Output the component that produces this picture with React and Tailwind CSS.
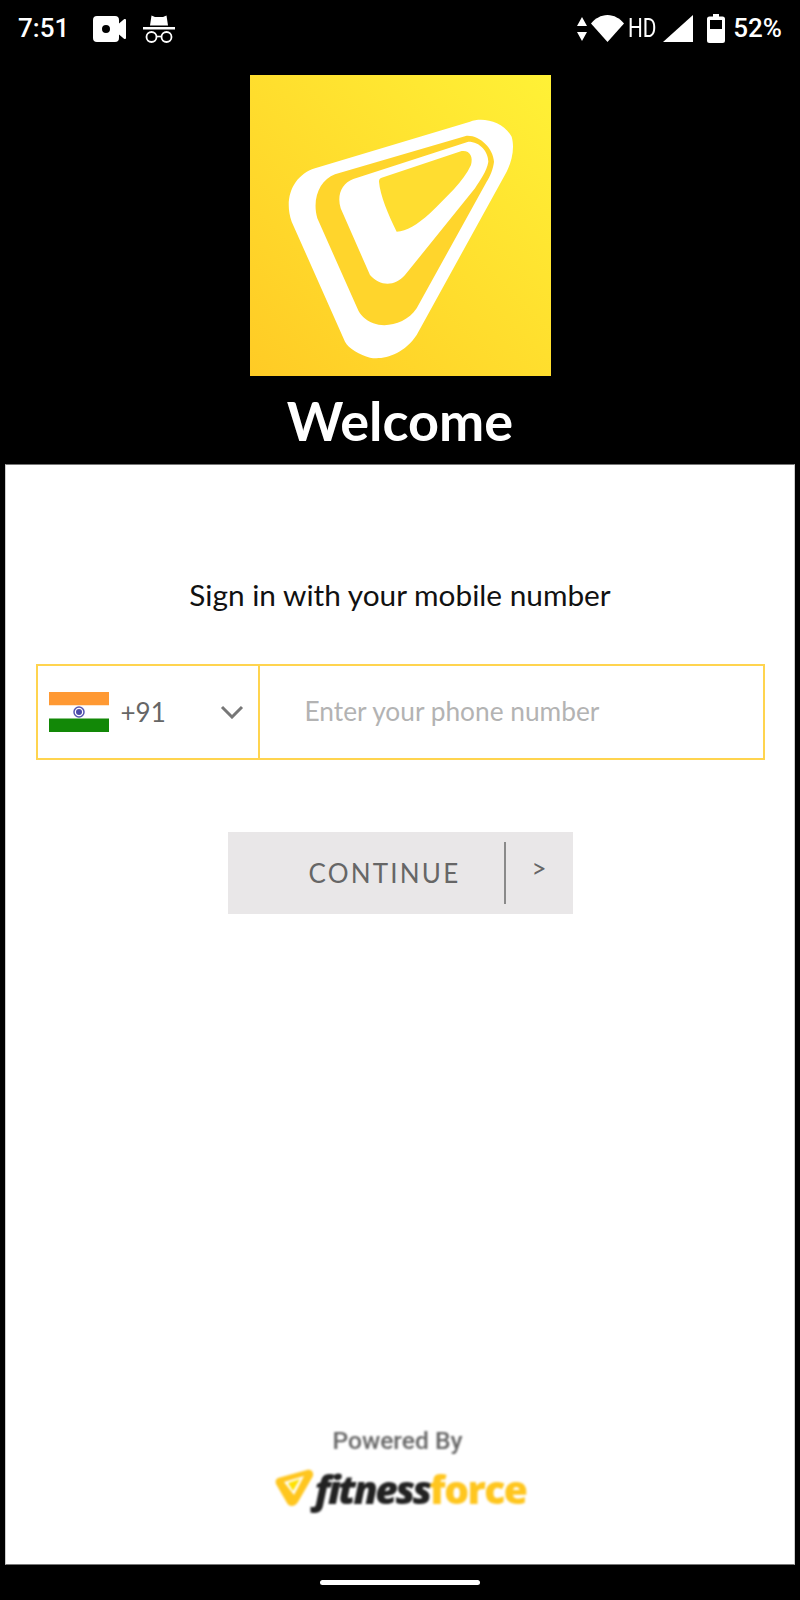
import React from 'react';

const StatusBar = () => (
  <div className="h-[56px] shrink-0 flex items-center justify-between pl-[18px] pr-[18px] pt-[1px] text-white font-['Roboto',sans-serif] font-medium text-[26px]">
    <div className="flex items-center">
      <span className="w-[50px]">7:51</span>
      <svg className="ml-[25px]" width="34" height="26" viewBox="0 0 34 26">
        <path fill="#fff" fillRule="evenodd" d="M4 0h18a4 4 0 0 1 4 4v3.500l5-4.200c1-.8 2-.3 2 1v17.400c0 1.300-1 1.800-2 1l-5-4.200V22a4 4 0 0 1-4 4H4a4 4 0 0 1-4-4V4a4 4 0 0 1 4-4zM13 9a4 4 0 1 0 0 8 4 4 0 0 0 0-8z" />
      </svg>
      <svg className="ml-[16px]" width="32" height="29" viewBox="0 0 32 29">
        <path fill="#fff" d="M7 11.500 8.500 1.500 12 3h8l3.500-1.500L25 11.500z" />
        <rect x="0" y="13" width="32" height="2.500" fill="#fff" />
        <circle cx="8.500" cy="23" r="5" fill="none" stroke="#fff" strokeWidth="1.800" />
        <circle cx="23.500" cy="23" r="5" fill="none" stroke="#fff" strokeWidth="1.800" />
        <path d="M13 22.500h6" stroke="#fff" strokeWidth="1.600" />
      </svg>
    </div>
    <div className="flex items-center">
      <svg width="10" height="24" viewBox="0 0 10 24">
        <path fill="#fff" d="M5 0l5 9H0zM0 15h10l-5 9z" />
      </svg>
      <svg className="ml-[4px]" width="33" height="27" viewBox="0 0 33 27">
        <path fill="#fff" d="M16.500 27 0 8.500C4 3.500 10 0 16.500 0S29 3.500 33 8.500z" />
      </svg>
      <span className="ml-[4px] w-[26px] text-[26px] font-normal scale-x-[0.8] origin-left whitespace-nowrap">HD</span>
      <svg className="ml-[9px]" width="30" height="27" viewBox="0 0 30 27">
        <path fill="#fff" d="M30 0v27H0z" />
      </svg>
      <svg className="ml-[14px]" width="18" height="29" viewBox="0 0 18 29">
        <path fill="#fff" fillRule="evenodd" d="M6 0h6v2.500h3.500A2.500 2.500 0 0 1 18 5v21.500a2.500 2.500 0 0 1-2.500 2.500h-13A2.500 2.500 0 0 1 0 26.500V5a2.500 2.500 0 0 1 2.500-2.500H6zM3 6v9h12V6z" />
      </svg>
      <span className="ml-[8px]">52%</span>
    </div>
  </div>
);

const BrandLogo = () => (
  <svg className="w-[301px] h-[301px] block" viewBox="30 30 903 903">
    <defs>
      <linearGradient id="brandBg" x1="0" y1="1" x2="1" y2="0">
        <stop offset="0" stopColor="#ffcb25" />
        <stop offset="1" stopColor="#fff136" />
      </linearGradient>
    </defs>
    <rect x="30" y="30" width="903" height="903" fill="url(#brandBg)" />
    <path fill="#fff" d="M225 310 690 170C730 155 790 170 815 215 825 250 815 290 800 320L530 810C490 870 430 885 390 878 360 870 325 850 315 830L155 470C130 400 160 330 225 310Z" />
    <path fill="#ffd52c" d="M285 328 680 212C720 210 760 250 762 290 760 310 750 335 740 350L530 730C500 775 440 790 400 775 375 765 360 750 352 730L232 460C215 400 240 345 285 328Z" />
    <path fill="#fff" d="M340 342 685 230C720 230 745 260 745 290 740 320 720 345 705 370L495 630C465 665 420 665 390 630L302 430C290 390 305 355 340 342Z" />
    <path fill="#ffdd30" d="M425 338 665 258C690 255 700 275 693 300 670 350 620 395 570 445 530 480 500 500 470 500 445 450 420 390 417 350 417 342 420 340 425 338Z" />
  </svg>
);

const IndiaFlag = () => (
  <svg width="60" height="40" viewBox="0 0 60 40" className="shrink-0">
    <rect width="60" height="13.500" fill="#ff9933" />
    <rect y="13.500" width="60" height="13" fill="#fff" />
    <rect y="26.500" width="60" height="13.500" fill="#128807" />
    <circle cx="30" cy="20" r="5" fill="#fff" stroke="#5555b0" strokeWidth="1.500" />
    <circle cx="30" cy="20" r="3" fill="#4a4aa8" />
  </svg>
);

const FooterLogo = () => (
  <div className="flex items-center blur-[1px] h-[40px]">
    <svg width="40" height="38" viewBox="0 0 40 38">
      <path fill="#ffc61f" d="M4 9 33 1c4-1 7 2 6 6L24 33c-3 5-9 5-11 1L2 15c-1-3 0-5 2-6z" />
      <path fill="#fff" d="M10 13 30 7 20 26z" />
      <path fill="#ffe100" d="M14 14 26 10 19 22z" />
    </svg>
    <span className="ml-[1px] font-['Open_Sans',sans-serif] font-extrabold italic text-[39px] leading-none tracking-[-2.500px] text-[#222]">fitness</span>
    <span className="font-['Open_Sans',sans-serif] font-extrabold text-[39px] leading-none tracking-[-1.500px] text-[#ffc61f]">force</span>
  </div>
);

export default function App() {
  return (
    <div className="w-[800px] h-[1600px] bg-black flex flex-col font-['Lato',sans-serif]">
      <StatusBar />
      <div className="flex flex-col items-center pt-[19px]">
        <BrandLogo />
        <h1 className="text-white font-bold text-[54px] leading-[88px] h-[88px] pt-[1px]">Welcome</h1>
      </div>
      <div className="mx-[5px] h-[1101px] bg-white border-y border-y-[#777] border-x border-x-[#ccc] flex flex-col items-center">
        <p className="mt-[112px] text-[29.8px] leading-[36px] text-[#111]">Sign in with your mobile number</p>
        <div className="mt-[51px] w-[729px] h-[96px] border-2 border-[#ffd44f] flex">
          <div className="w-[222px] border-r-2 border-r-[#ffd44f] flex items-center pl-[11px] pr-[14px]">
            <IndiaFlag />
            <span className="ml-[12px] text-[26px] text-[#666]">+91</span>
            <svg className="ml-auto" width="24" height="14" viewBox="0 0 24 14">
              <path d="M2 2l10 10L22 2" fill="none" stroke="#777" strokeWidth="3" />
            </svg>
          </div>
          <div className="flex-1 flex items-center pl-[45px] text-[26.3px] text-[#b3b3b3]">Enter your phone number</div>
        </div>
        <button className="mt-[72px] w-[345px] h-[82px] bg-[#e9e7e8] flex items-center relative">
          <span className="ml-[81px] w-[195px] text-left text-[26px] tracking-[2.200px] text-[#666]">CONTINUE</span>
          <span className="w-[2px] h-[62px] bg-[#8a8a8a]" />
          <span className="ml-[26px] -mt-[10px] text-[26px] text-[#666]">&gt;</span>
        </button>
        <div className="mt-auto mb-[56px] flex flex-col items-center">
          <span className="pr-[5px] font-['Roboto',sans-serif] font-medium text-[24.6px] leading-[32px] text-[#666] blur-[1px]">Powered By</span>
          <div className="mt-[11px]">
            <FooterLogo />
          </div>
        </div>
      </div>
      <div className="flex-1 flex items-center justify-center">
        <div className="w-[160px] h-[5px] rounded-full bg-white" />
      </div>
    </div>
  );
}
